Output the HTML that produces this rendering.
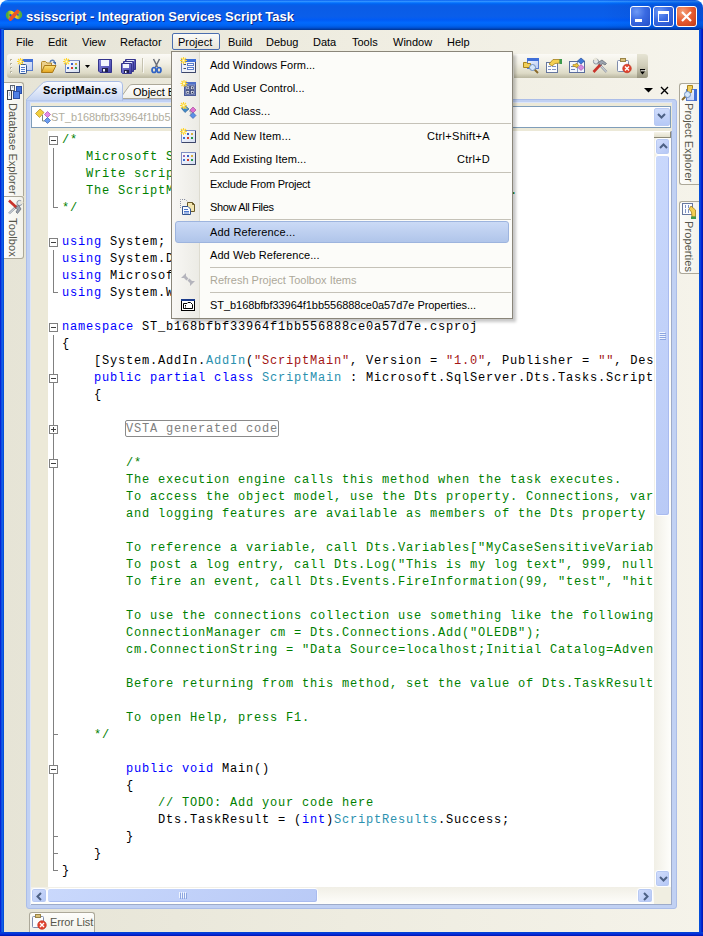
<!DOCTYPE html>
<html>
<head>
<meta charset="utf-8">
<title>ssisscript - Integration Services Script Task</title>
<style>
html,body{margin:0;padding:0;}
body{width:703px;height:936px;overflow:hidden;background:#ece9d8;font-family:"Liberation Sans",sans-serif;font-size:11px;color:#000;}
#win{position:absolute;left:0;top:0;width:703px;height:936px;overflow:hidden;background:linear-gradient(90deg,#e6e4d6 0,#eeece0 50%,#f5f3ea 100%);}
.abs{position:absolute;}
/* window frame */
#frameL{left:0;top:29px;width:4px;height:907px;background:linear-gradient(90deg,#0019cf 0,#0831d9 1px,#166aee 2px,#0855dd 3px,#0046d5 4px);}
#frameR{left:699px;top:29px;width:4px;height:907px;background:linear-gradient(90deg,#0046d5 0,#0855dd 1px,#0831d9 2px,#0019cf 3px,#001ea0 4px);}
#frameB{left:0;top:932px;width:703px;height:4px;background:linear-gradient(180deg,#0046d5 0,#0831d9 2px,#0019cf 3px,#001ea0 4px);}
#title{left:0;top:0;width:703px;height:30px;border-radius:8px 8px 0 0;
background:linear-gradient(180deg,#0058ee 0%,#3593ff 4%,#288eff 6%,#127dff 8%,#036ffc 10%,#0262ee 14%,#0a5ce6 20%,#0a5ce6 24%,#0a5eea 56%,#005bf5 66%,#026afe 76%,#0062ef 86%,#0052d6 92%,#0040ab 97%,#003092 100%);}
#titleR{left:603px;top:0;width:100px;height:30px;border-radius:0 8px 0 0;background:linear-gradient(90deg,rgba(0,40,160,0),rgba(0,40,160,0.28));}
#titletxt{left:26px;top:9px;color:#fff;font-weight:bold;font-size:13px;line-height:16px;white-space:nowrap;text-shadow:1px 1px 0 #0a2a8a;letter-spacing:-0.03px;}
/* menu bar */
#menubar{left:4px;top:30px;width:695px;height:24px;background:linear-gradient(90deg,#e5e3d6 0,#efede1 50%,#f6f4ec 100%);}
.mi{position:absolute;top:36px;font-size:11px;line-height:13px;white-space:nowrap;}
#projbtn{left:172px;top:33px;width:46px;height:15px;border:1px solid #4b6eaf;border-radius:2px;background:linear-gradient(180deg,#fbfbf9,#e8e6da);}
/* toolbar */
#tbrow{left:4px;top:54px;width:695px;height:26px;background:linear-gradient(90deg,#e5e3d6 0,#efede1 50%,#f6f4ec 100%);}
#toolbar1{left:7px;top:54px;width:165px;height:24px;border-radius:3px 0 0 3px;background:linear-gradient(180deg,#fbfaf6 0,#f1efe4 40%,#dddac6 80%,#b9b6a0 100%);}
#toolbar2{left:514px;top:54px;width:134px;height:24px;border-radius:0 3px 3px 0;background:linear-gradient(180deg,#fbfaf6 0,#f1efe4 40%,#dddac6 80%,#b9b6a0 100%);}

/* side strips */
#stripL{left:4px;top:80px;width:22px;height:852px;background:transparent;}
#stripR{left:677px;top:80px;width:22px;height:852px;background:transparent;}
.sidetab{position:absolute;background:linear-gradient(90deg,#fdfdfb,#f3f2ea);border:1px solid #aca899;}
.vtxt{position:absolute;white-space:nowrap;font-size:11px;line-height:13px;color:#55554a;transform-origin:0 0;transform:rotate(90deg);}
/* doc area */
#docbg{left:23px;top:80px;width:654px;height:830px;background:transparent;}
#tabstrip{left:26px;top:80px;width:651px;height:19px;background:transparent;}
#frame{left:26px;top:99px;width:651px;height:810px;background:#c1d1f3;border-radius:3px;box-sizing:border-box;border:1px solid #abbde8;}
#frameIn{left:31px;top:103px;width:641px;height:801px;background:#ece9d8;}
#combo{left:31px;top:106px;width:640px;height:22px;box-sizing:border-box;border:1px solid #7f9db9;background:#fff;}
#combotxt{left:51px;top:111px;letter-spacing:-0.08px;font-size:11px;line-height:13px;color:#b1aea0;white-space:nowrap;width:460px;overflow:hidden;}
#combobtn{left:654px;top:108px;width:16px;height:18px;border-radius:2px;background:linear-gradient(180deg,#cfdcfb,#b6c9f6);border:1px solid #b9caf3;box-sizing:border-box;}
/* editor */
#editor{left:31px;top:131px;width:623px;height:756px;background:#fff;overflow:hidden;}
#margin{left:0;top:0;width:17px;height:757px;background:#ece9d8;}
#code{left:31px;top:1px;width:592px;font-family:"Liberation Mono",monospace;font-size:12px;letter-spacing:0.8px;line-height:17px;color:#000;}
.ln{height:17px;overflow:hidden;white-space:pre;}
.c{color:#008000;}.k{color:#0000ff;}.s{color:#a31515;}.t{color:#2b91af;}
.vsta{color:#808080;}
#vstabox{left:94px;top:289px;width:154px;height:17px;box-sizing:border-box;border:1px solid #8a8a8a;border-radius:2px;}
.ob{position:absolute;left:18px;width:7px;height:7px;border:1px solid #808080;background:#fff;}
.ob:before{content:"";position:absolute;left:1px;top:3px;width:5px;height:1px;background:#404040;}
.ob.plus:after{content:"";position:absolute;left:3px;top:1px;width:1px;height:5px;background:#404040;}
.ovl{position:absolute;left:22px;width:1px;background:#808080;}
.otk{position:absolute;left:22px;width:5px;height:1px;background:#808080;}
/* scrollbars */
#vsb{left:654px;top:131px;width:17px;height:756px;background:linear-gradient(90deg,#f1efe6,#fefefb);}
#hsb{left:31px;top:887px;width:623px;height:17px;background:linear-gradient(180deg,#f1efe6,#fefefb);}
#corner{left:654px;top:887px;width:17px;height:17px;background:#f0eee1;}
.sbtn{position:absolute;box-sizing:border-box;border:1px solid #fff;border-radius:3px;background:linear-gradient(135deg,#d3defc,#b3c6f5);box-shadow:inset 0 0 0 1px #b7c9f3;}
.thumb{position:absolute;box-sizing:border-box;border:1px solid #fff;border-radius:3px;background:linear-gradient(135deg,#c9d8fc,#b9caf6);box-shadow:inset -1px -1px 0 #a9bbef;}

/* dropdown menu */
#ddshadow{left:175px;top:55px;width:341px;height:267px;background:rgba(0,0,0,0.22);filter:blur(1.5px);}
#dd{left:171px;top:51px;width:342px;height:268px;box-sizing:border-box;border:1px solid #8a867a;background:#fcfcf9;}
#ddgut{left:172px;top:52px;width:28px;height:266px;background:linear-gradient(90deg,#f8f7f4,#ecebe5);border-right:1px solid #dddbd0;box-sizing:border-box;}
#ddopen{left:173px;top:51px;width:46px;height:1px;background:#f4f3ec;}
.di{position:absolute;left:210px;font-size:11px;line-height:13px;white-space:nowrap;color:#000;}
.dk{position:absolute;font-size:11px;line-height:13px;white-space:nowrap;color:#000;}
.dsep{position:absolute;left:210px;width:301px;height:1px;background:#c5c2b8;}
#ddhl{left:175px;top:221px;width:334px;height:22px;box-sizing:border-box;border:1px solid #9db4de;border-radius:3px;background:linear-gradient(180deg,#cbdaf6,#b0c5ea);}
.ic{position:absolute;width:16px;height:16px;}

.chev{position:absolute;}
#split{left:654px;top:131px;width:17px;height:7px;box-sizing:border-box;background:linear-gradient(180deg,#f6f4ea,#e2dfcc);border-right:1px solid #8c8977;border-bottom:1px solid #8c8977;border-top:1px solid #fff;}
.grip{position:absolute;}
/* doc tabs */
#tabA{left:33px;top:82px;width:92px;height:18px;}
#tabtxtA{left:43px;top:84px;letter-spacing:0.23px;font-weight:bold;font-size:11px;line-height:13px;white-space:nowrap;}
#tabtxtB{left:133px;top:86px;font-size:11px;line-height:13px;white-space:nowrap;width:38px;overflow:hidden;}
#errtab{left:29px;top:912px;width:66px;height:21px;box-sizing:border-box;border:1px solid #aca899;border-bottom:none;border-radius:3px 3px 0 0;background:linear-gradient(180deg,#fdfdfb,#f1f0e8);}
#errtxt{left:50px;top:916px;font-size:11px;line-height:13px;white-space:nowrap;color:#55554a;letter-spacing:-0.15px;}

.wb{position:absolute;top:6px;width:21px;height:21px;box-sizing:border-box;border:1px solid #fff;border-radius:3px;}
#wbmin,#wbmax{background:radial-gradient(circle at 30% 25%,#6e9af6 0,#3a6ae2 45%,#2450c8 100%);}
#wbclose{background:radial-gradient(circle at 30% 25%,#f4a078 0,#e65a30 50%,#c23a16 100%);}
</style>
</head>
<body>
<div id="win">
<div class="abs" style="left:0;top:0;width:703px;height:10px;background:#fff"></div>
<div id="title" class="abs"></div>
<div id="titleR" class="abs"></div>
<div id="titletxt" class="abs">ssisscript - Integration Services Script Task</div>
<div id="menubar" class="abs"></div>
<div id="tbrow" class="abs"></div>
<div id="toolbar1" class="abs"></div>
<div id="toolbar2" class="abs"></div>
<div class="abs" style="left:637px;top:54px;width:11px;height:24px;border-radius:0 3px 3px 0;background:linear-gradient(180deg,#e6e4d4 0,#cfccb8 50%,#98957f 100%)"></div>
<div id="projbtn" class="abs"></div>
<span class="mi" style="left:16px">File</span>
<span class="mi" style="left:48px">Edit</span>
<span class="mi" style="left:82px">View</span>
<span class="mi" style="left:120px">Refactor</span>
<span class="mi" style="left:178px">Project</span>
<span class="mi" style="left:228px">Build</span>
<span class="mi" style="left:266px">Debug</span>
<span class="mi" style="left:313px">Data</span>
<span class="mi" style="left:352px">Tools</span>
<span class="mi" style="left:393px">Window</span>
<span class="mi" style="left:447px">Help</span>

<div id="stripL" class="abs"></div>
<div id="stripR" class="abs"></div>
<div id="docbg" class="abs"></div>
<div id="tabstrip" class="abs"></div>
<div id="frame" class="abs"></div>
<div class="abs" style="left:30px;top:102px;width:1px;height:803px;background:#dde6f9"></div>
<div class="abs" style="left:30px;top:102px;width:642px;height:1px;background:#dde6f9"></div>
<div id="frameIn" class="abs"></div>
<div id="combo" class="abs"></div>
<div id="combotxt" class="abs">ST_b168bfbf33964f1bb556888ce0a57d7e.csproj.ScriptMain</div>
<div id="combobtn" class="abs"></div>
<div id="editor" class="abs">
<div id="margin" class="abs"></div>
<div id="vstabox" class="abs"></div>
<div id="outl"><div class="ovl" style="top:17px;height:60px"></div><div class="otk" style="top:76px"></div><div class="ovl" style="top:119px;height:43px"></div><div class="otk" style="top:161px"></div><div class="ovl" style="top:204px;height:536px"></div><div class="otk" style="top:603px"></div><div class="otk" style="top:705px"></div><div class="otk" style="top:722px"></div><div class="otk" style="top:739px"></div><div class="ob" style="top:5px"></div><div class="ob" style="top:107px"></div><div class="ob" style="top:192px"></div><div class="ob" style="top:243px"></div><div class="ob plus" style="top:294px"></div><div class="ob" style="top:328px"></div><div class="ob" style="top:634px"></div></div>
<div id="code" class="abs">
<div class="ln"><span class="c">/*</span></div>
<div class="ln"><span class="c">   Microsoft SQL Server Integration Services Script Task</span></div>
<div class="ln"><span class="c">   Write scripts using Microsoft Visual C# 2008.</span></div>
<div class="ln"><span class="c">   The ScriptMain is the entry point class of the script.</span></div>
<div class="ln"><span class="c">*/</span></div>
<div class="ln">&nbsp;</div>
<div class="ln"><span class="k">using</span> System;</div>
<div class="ln"><span class="k">using</span> System.Data;</div>
<div class="ln"><span class="k">using</span> Microsoft.SqlServer.Dts.Runtime;</div>
<div class="ln"><span class="k">using</span> System.Windows.Forms;</div>
<div class="ln">&nbsp;</div>
<div class="ln"><span class="k">namespace</span> ST_b168bfbf33964f1bb556888ce0a57d7e.csproj</div>
<div class="ln">{</div>
<div class="ln">    [System.AddIn.<span class="t">AddIn</span>(<span class="s">"ScriptMain"</span>, Version = <span class="s">"1.0"</span>, Publisher = <span class="s">""</span>, Des</div>
<div class="ln">    <span class="k">public partial class</span> <span class="t">ScriptMain</span> : Microsoft.SqlServer.Dts.Tasks.Script</div>
<div class="ln">    {</div>
<div class="ln">&nbsp;</div>
<div class="ln">        <span class="vsta">VSTA generated code</span></div>
<div class="ln">&nbsp;</div>
<div class="ln"><span class="c">        /*</span></div>
<div class="ln"><span class="c">        The execution engine calls this method when the task executes.</span></div>
<div class="ln"><span class="c">        To access the object model, use the Dts property. Connections, var</span></div>
<div class="ln"><span class="c">        and logging features are available as members of the Dts property </span></div>
<div class="ln">&nbsp;</div>
<div class="ln"><span class="c">        To reference a variable, call Dts.Variables["MyCaseSensitiveVariab</span></div>
<div class="ln"><span class="c">        To post a log entry, call Dts.Log("This is my log text", 999, null</span></div>
<div class="ln"><span class="c">        To fire an event, call Dts.Events.FireInformation(99, "test", "hit</span></div>
<div class="ln">&nbsp;</div>
<div class="ln"><span class="c">        To use the connections collection use something like the following</span></div>
<div class="ln"><span class="c">        ConnectionManager cm = Dts.Connections.Add("OLEDB");</span></div>
<div class="ln"><span class="c">        cm.ConnectionString = "Data Source=localhost;Initial Catalog=Adven</span></div>
<div class="ln">&nbsp;</div>
<div class="ln"><span class="c">        Before returning from this method, set the value of Dts.TaskResult</span></div>
<div class="ln">&nbsp;</div>
<div class="ln"><span class="c">        To open Help, press F1.</span></div>
<div class="ln"><span class="c">    */</span></div>
<div class="ln">&nbsp;</div>
<div class="ln">        <span class="k">public void</span> Main()</div>
<div class="ln">        {</div>
<div class="ln">            <span class="c">// TODO: Add your code here</span></div>
<div class="ln">            Dts.TaskResult = (<span class="k">int</span>)<span class="t">ScriptResults</span>.Success;</div>
<div class="ln">        }</div>
<div class="ln">    }</div>
<div class="ln">}</div>
</div>
</div>
<div id="vsb" class="abs"></div>
<div id="hsb" class="abs"></div>
<div id="corner" class="abs"></div>
<!--BODY2-->

<div id="split" class="abs"></div>
<div class="sbtn" style="left:655px;top:138px;width:15px;height:17px"><svg class="chev" style="left:3px;top:4px" width="9" height="6" viewBox="0 0 9 6"><path d="M1 5 L4.5 1.5 L8 5" fill="none" stroke="#4d6185" stroke-width="2"/></svg></div>
<div class="thumb" style="left:655px;top:155px;width:15px;height:361px"></div>
<div class="sbtn" style="left:655px;top:870px;width:15px;height:17px"><svg class="chev" style="left:3px;top:5px" width="9" height="6" viewBox="0 0 9 6"><path d="M1 1 L4.5 4.5 L8 1" fill="none" stroke="#4d6185" stroke-width="2"/></svg></div>
<div class="sbtn" style="left:31px;top:888px;width:16px;height:15px"><svg class="chev" style="left:4px;top:3px" width="6" height="9" viewBox="0 0 6 9"><path d="M5 1 L1.5 4.5 L5 8" fill="none" stroke="#4d6185" stroke-width="2"/></svg></div>
<div class="thumb" style="left:47px;top:888px;width:271px;height:15px"></div>
<div class="sbtn" style="left:637px;top:888px;width:16px;height:15px"><svg class="chev" style="left:5px;top:3px" width="6" height="9" viewBox="0 0 6 9"><path d="M1 1 L4.5 4.5 L1 8" fill="none" stroke="#4d6185" stroke-width="2"/></svg></div>
<svg class="abs" style="left:657px;top:113px" width="9" height="6" viewBox="0 0 9 6"><path d="M1 1 L4.5 4.5 L8 1" fill="none" stroke="#4d6185" stroke-width="2"/></svg>
<svg class="abs" style="left:26px;top:80px" width="160" height="21" viewBox="0 0 160 21">
<defs><linearGradient id="tg" x1="0" y1="0" x2="0" y2="1"><stop offset="0" stop-color="#fdfdfe"/><stop offset="1" stop-color="#c3d3f3"/></linearGradient>
<linearGradient id="tg2" x1="0" y1="0" x2="0" y2="1"><stop offset="0" stop-color="#fefefd"/><stop offset="1" stop-color="#f1f0e8"/></linearGradient></defs>
<path d="M94 18.500 L103.500 5.500 Q104.500 4.500 107 4.500 L160 4.500 L160 18.500 Z" fill="url(#tg2)" stroke="#aca899" stroke-width="1"/>
<path d="M0.500 21 L0.500 19.500 L14.500 5 Q17.500 1.500 21 1.500 L93 1.500 Q96.500 1.500 96.500 5 L96.500 21 Z" fill="url(#tg)" stroke="#a9bde6" stroke-width="1"/>
</svg>
<div id="tabtxtA" class="abs">ScriptMain.cs</div>
<div id="tabtxtB" class="abs">Object Browser</div>
<svg class="abs" style="left:644px;top:88px" width="9" height="5" viewBox="0 0 9 5"><path d="M0 0 H9 L4.500 4.500 Z" fill="#000"/></svg>
<svg class="abs" style="left:660px;top:86px" width="9" height="9" viewBox="0 0 9 9"><path d="M1 1 L8 8 M8 1 L1 8" stroke="#000" stroke-width="1.400"/></svg>
<div id="errtab" class="abs"></div>
<div id="errtxt" class="abs">Error List</div>

<div class="sidetab" style="left:4px;top:82px;width:20px;height:114px;border-left:none;border-bottom:none;border-radius:0 3px 0 0;box-sizing:border-box"></div>
<div class="sidetab" style="left:4px;top:196px;width:20px;height:63px;border-left:none;border-radius:0 3px 3px 0;box-sizing:border-box"></div>
<div class="vtxt" style="left:19px;top:103px;letter-spacing:0.03px">Database Explorer</div>
<div class="vtxt" style="left:19px;top:218px;letter-spacing:0.15px">Toolbox</div>
<div class="sidetab" style="left:679px;top:83px;width:20px;height:102px;border-right:none;border-radius:3px 0 0 3px;box-sizing:border-box"></div>
<div class="sidetab" style="left:679px;top:201px;width:20px;height:73px;border-right:none;border-radius:3px 0 0 3px;box-sizing:border-box"></div>
<div class="vtxt" style="left:695px;top:103px;letter-spacing:0.05px">Project Explorer</div>
<div class="vtxt" style="left:695px;top:221px;letter-spacing:0.1px">Properties</div>

<div id="wbmin" class="wb" style="left:630px"><div class="abs" style="left:4px;top:12px;width:7px;height:3px;background:#fff"></div></div>
<div id="wbmax" class="wb" style="left:653px"><div class="abs" style="left:4px;top:4px;width:11px;height:11px;box-sizing:border-box;border:1px solid #fff;border-top:3px solid #fff"></div></div>
<div id="wbclose" class="wb" style="left:676px"><svg class="abs" style="left:4px;top:4px" width="11" height="11" viewBox="0 0 11 11"><path d="M1 1 L10 10 M10 1 L1 10" stroke="#fff" stroke-width="2.200"/></svg></div>
<svg class="abs" style="left:5px;top:8px" width="18" height="14" viewBox="0 0 18 14">
<defs><linearGradient id="ai1" x1="0" y1="0" x2="1" y2="0"><stop offset="0" stop-color="#4faa3a"/><stop offset="0.300" stop-color="#f5d21e"/><stop offset="0.700" stop-color="#f7c81c"/><stop offset="1" stop-color="#55ad3c"/></linearGradient></defs>
<path d="M3.500 9.500 C1 6 4.500 2.500 8 5.500 L10.500 8 C13.500 11.500 17 8 14.500 4.500" fill="none" stroke="url(#ai1)" stroke-width="3.400" stroke-linecap="round"/>
<path d="M5.500 11 L12.500 3.500" stroke="#e8552a" stroke-width="3.800" stroke-linecap="round"/>
</svg>

<div class="abs" style="left:671px;top:131px;width:1px;height:774px;background:#9dabc9"></div>
<div class="abs" style="left:31px;top:904px;width:641px;height:1px;background:#9dabc9"></div>
<svg class="abs" style="left:659px;top:332px" width="7" height="9" viewBox="0 0 7 9"><path d="M0 0.500 H6 M0 2.500 H6 M0 4.500 H6 M0 6.500 H6" stroke="#eef4fe"/><path d="M1 1.500 H7 M1 3.500 H7 M1 5.500 H7 M1 7.500 H7" stroke="#8ca5e0"/></svg>
<svg class="abs" style="left:179px;top:892px" width="9" height="7" viewBox="0 0 9 7"><path d="M0.500 0 V6 M2.500 0 V6 M4.500 0 V6 M6.500 0 V6" stroke="#eef4fe"/><path d="M1.500 1 V7 M3.500 1 V7 M5.500 1 V7 M7.500 1 V7" stroke="#8ca5e0"/></svg>
<!--ICONS1S--><svg class="abs" style="left:0;top:0" width="703" height="936" viewBox="0 0 703 936">
<defs>
<g id="spark"><path d="M3.500 0 V7 M0 3.500 H7 M1 1 L6 6 M6 1 L1 6" stroke="#ffd52e" stroke-width="1.100"/><rect x="2.500" y="2.500" width="2" height="2" fill="#fffbd0"/></g>
<linearGradient id="gwin" x1="0" y1="0" x2="1" y2="1"><stop offset="0" stop-color="#f4f7fe"/><stop offset="1" stop-color="#b9cbf2"/></linearGradient>
<linearGradient id="gfold" x1="0" y1="0" x2="0" y2="1"><stop offset="0" stop-color="#fbe27a"/><stop offset="1" stop-color="#e2a21c"/></linearGradient>
<linearGradient id="gflop" x1="0" y1="0" x2="1" y2="1"><stop offset="0" stop-color="#8a8ae0"/><stop offset="1" stop-color="#3c3ca4"/></linearGradient>
<linearGradient id="gpanel" x1="0" y1="0" x2="1" y2="1"><stop offset="0" stop-color="#ffffff"/><stop offset="1" stop-color="#d4ddf2"/></linearGradient>
<g id="panel"><rect x="0.500" y="0.500" width="14" height="12" fill="url(#gpanel)" stroke="#7f8fc4"/><path d="M1 12.500 H14.500 V1" fill="none" stroke="#3d4668"/></g>
<g id="dots"><rect x="6" y="3" width="2" height="2" fill="#3a5fc8"/><rect x="10" y="3" width="2" height="2" fill="#d8b040"/><rect x="2" y="7" width="2" height="2" fill="#3a6fd0"/><rect x="6" y="7" width="2" height="2" fill="#d83a2a"/><rect x="10" y="7" width="2" height="2" fill="#2a9a4a"/></g>
<g id="floppy"><path d="M0.500 0.500 H13.500 V13.500 H2 L0.500 12 Z" fill="url(#gflop)" stroke="#34348c"/><rect x="3" y="1" width="8" height="6" fill="#f2f5fd"/><rect x="4" y="9" width="6" height="4" fill="#20204c"/><rect x="5" y="10" width="2" height="2.500" fill="#f2f5fd"/></g>
</defs>
<!-- toolbar grip -->
<g fill="#b6b3a0"><rect x="10" y="59" width="2" height="2"/><rect x="10" y="63" width="2" height="2"/><rect x="10" y="67" width="2" height="2"/><rect x="10" y="71" width="2" height="2"/></g>
<g fill="#ffffff"><rect x="11" y="60" width="1" height="1"/><rect x="11" y="64" width="1" height="1"/><rect x="11" y="68" width="1" height="1"/><rect x="11" y="72" width="1" height="1"/></g>
<!-- 1 new project -->
<g transform="translate(17,58)">
<rect x="5.500" y="1.500" width="10" height="11" fill="url(#gwin)" stroke="#5b7dcc"/><rect x="5" y="1" width="11" height="3" fill="#3f6fd8"/>
<rect x="2.500" y="6.500" width="7" height="9" rx="1" fill="#f6f9ff" stroke="#34558f"/><path d="M4 9.500 H8 M4 11.500 H8 M4 13.500 H8" stroke="#4d78cc"/>
<use href="#spark" x="0" y="0"/>
</g>
<!-- 2 open -->
<g transform="translate(40,58)">
<path d="M10 4.500 C10.500 1.500 14 1.500 14.500 4" fill="none" stroke="#5b7fb8" stroke-width="1.400"/><path d="M12.500 4 H16 V7 Z" fill="#4a6fa8"/>
<path d="M1.500 14 V4.500 Q1.500 3.500 2.500 3.500 H5.500 L7 5 H11.500 V7" fill="#ecd08a" stroke="#b58a2c"/>
<path d="M1.500 14.500 L4.500 7.500 H16 L12.500 14.500 Z" fill="url(#gfold)" stroke="#a87818"/>
</g>
<!-- 3 add item -->
<g transform="translate(63,58)"><use href="#panel" x="2" y="2"/><g transform="translate(2,2)"><use href="#dots"/></g><use href="#spark" x="0" y="0"/></g>
<path d="M85 65 H90 L87.500 68 Z" fill="#000"/>
<!-- 5 save -->
<g transform="translate(98,59)"><use href="#floppy"/></g>
<!-- 6 save all -->
<g transform="translate(121,59)">
<path d="M4.500 0.500 H14.500 V10.500 H4.500 Z" fill="url(#gflop)" stroke="#34348c"/><rect x="6" y="1" width="7" height="2" fill="#e6ebfb"/>
<path d="M2.500 2.500 H12.500 V12.500 H2.500 Z" fill="url(#gflop)" stroke="#34348c"/><rect x="4" y="3" width="7" height="2" fill="#e6ebfb"/>
<path d="M0.500 4.500 H10.500 V14.500 H1.500 L0.500 13.500 Z" fill="url(#gflop)" stroke="#34348c"/><rect x="2" y="5" width="6" height="4" fill="#f2f5fd"/><rect x="3" y="11" width="5" height="3" fill="#20204c"/><rect x="4" y="12" width="1.500" height="2" fill="#f2f5fd"/>
</g>
<rect x="142" y="58" width="1" height="14" fill="#c5c2b0"/><rect x="143" y="59" width="1" height="14" fill="#ffffff" opacity="0.700"/>
<!-- 7 cut -->
<g transform="translate(151,59)">
<path d="M2.500 0 L6.500 8 M8.500 0 L4.500 8" stroke="#6a6e78" stroke-width="1.500" fill="none"/>
<ellipse cx="3" cy="11" rx="2" ry="2.500" fill="none" stroke="#2f62c4" stroke-width="1.700"/><ellipse cx="8" cy="11" rx="2" ry="2.500" fill="none" stroke="#2f62c4" stroke-width="1.700"/>
</g>
<!-- A solution explorer -->
<g id="icA" transform="translate(523,58)">
<rect x="4.500" y="0.500" width="11" height="10" fill="url(#gwin)" stroke="#5b7dcc"/><rect x="4" y="0" width="12" height="3" fill="#3f6fd8"/>
<path d="M0.500 4.500 H3.500 L4.500 5.500 H7.500 V9.500 H0.500 Z" fill="#f1cf5a" stroke="#a8841e"/>
<path d="M11.500 11.500 L15 15" stroke="#8a6a2a" stroke-width="2"/><circle cx="9.500" cy="9.500" r="3" fill="#d4e6fa" stroke="#6f8fc0"/>
</g>
<!-- B properties window -->
<g id="icB" transform="translate(546,58)">
<rect x="0.500" y="4.500" width="11" height="10" fill="#fbfcff" stroke="#66779f"/><path d="M2 8.500 H5 M6 8.500 H10 M2 11.500 H5 M6 11.500 H10" stroke="#8094c4"/>
<path d="M3 6 L7 1.500 L14 1.500 V5 L9 5.500 L6 8 Z" fill="#f3cf52" stroke="#a5801c" stroke-width="0.800"/><rect x="13.500" y="1" width="2.500" height="5" fill="#3f9a4c"/>
</g>
<!-- C object browser -->
<g transform="translate(569,58)">
<rect x="0.500" y="3.500" width="15" height="11" fill="#f3f6fd" stroke="#5a6c9c"/><path d="M8.500 4 V14" stroke="#8a9ac4"/><path d="M2 8.500 H6 M2 11.500 H6" stroke="#6e86c0"/>
<path d="M12 0 L15.500 3 L12 6 L8.500 3 Z" fill="#3f78d8" stroke="#2a52a0" stroke-width="0.700"/>
<path d="M12 6.500 L15 9.500 L12 12.500 L9 9.500 Z" fill="#d58ae0" stroke="#9a4cae" stroke-width="0.700"/>
<path d="M4 6.500 H7 V5 L10 7.500 L7 10 V8.500 H4 Z" fill="#f2c83c" stroke="#a8801c" stroke-width="0.600"/>
</g>
<!-- D toolbox -->
<g id="icD" transform="translate(592,58)">
<path d="M14.500 14 L5 4" stroke="#8d949e" stroke-width="2.400"/><path d="M14.500 14 L5 4" stroke="#e6eaf0" stroke-width="1"/><circle cx="4" cy="3.500" r="2.600" fill="#dfe4ea" stroke="#8d949e"/><rect x="2" y="0" width="3" height="3" fill="#e9e7da" transform="rotate(-45 3.500 1.500)"/>
<path d="M1.500 14 L9 6" stroke="#c8322a" stroke-width="2.600"/><path d="M6 4.500 L10 2 L14.500 5.500 L13 7 L10.500 5.500 L9 7.500 Z" fill="#9aa2ae" stroke="#5f6670" stroke-width="0.700"/>
</g>
<!-- E error list -->
<g transform="translate(616,58)">
<rect x="1.500" y="2.500" width="11" height="11" rx="1" fill="#fbfcff" stroke="#7f8cac"/><rect x="4.500" y="0.500" width="5" height="3" fill="#d9c07a" stroke="#9a8448"/>
<circle cx="11" cy="10.500" r="4.300" fill="#e2432e" stroke="#b62a1a" stroke-width="0.600"/><path d="M9 8.500 L13 12.500 M13 8.500 L9 12.500" stroke="#fff" stroke-width="1.400"/>
</g>
<!-- overflow -->
<rect x="640" y="69" width="5" height="1.500" fill="#000"/><path d="M640 71.500 H645 L642.500 74.500 Z" fill="#000"/><rect x="641" y="70" width="5" height="1" fill="#fff" opacity="0.600"/>

<!-- side tab icons (rotated) -->
<g transform="translate(697,85) rotate(90) translate(-523,-58)"><use href="#icA"/></g>
<g transform="translate(697,203) rotate(90) translate(-546,-58)"><use href="#icB"/></g>
<g transform="translate(23,199) rotate(90) translate(-592,-58)"><use href="#icD"/></g>
<!-- database explorer icon -->
<g transform="translate(7,85)">
<rect x="9.500" y="1.500" width="5" height="7" fill="#3f6fd8" stroke="#2a4fa8"/><rect x="6.500" y="6.500" width="6" height="7" fill="#4f80e6" stroke="#2a4fa8"/>
<rect x="3.500" y="0.500" width="4" height="5" fill="#f4f6fa" stroke="#5a6270"/><rect x="0.500" y="5.500" width="4" height="9" fill="#f4f6fa" stroke="#3c444e"/><path d="M2 8 H3 M2 10 H3 M5 2 H6" stroke="#7a8ab0"/>
</g>
<!-- nav combo icon -->
<g transform="translate(35,108)">
<path d="M7.500 7 V13 H10" fill="none" stroke="#7a8a80"/>
<path d="M0.500 5.500 L5 1 L9 4.500 L4.500 9.500 Z" fill="#f2cf3e" stroke="#b08a1c" stroke-width="0.700"/>
<path d="M12.500 3.500 L15.500 6.500 L12.500 9.500 L9.500 6.500 Z" fill="#e68ae8" stroke="#a44cae" stroke-width="0.700"/>
<path d="M12.500 9.500 L15.500 12.500 L12.500 15.500 L9.500 12.500 Z" fill="#6a9cf0" stroke="#3560b0" stroke-width="0.700"/>
</g>
<!-- error list tab icon -->
<g transform="translate(31,914)">
<rect x="1.500" y="2.500" width="11" height="11" rx="1" fill="#fbfcff" stroke="#7f8cac"/><rect x="4.500" y="0.500" width="5" height="3" fill="#d9c07a" stroke="#9a8448"/>
<circle cx="11" cy="11" r="4.300" fill="#e2432e" stroke="#b62a1a" stroke-width="0.600"/><path d="M9 9 L13 13 M13 9 L9 13" stroke="#fff" stroke-width="1.400"/>
</g>
</svg>
<!--ICONS1E-->
<!--ICONS-->
<!--MENU-->
<div id="ddshadow" class="abs"></div>
<div id="dd" class="abs"></div>
<div id="ddgut" class="abs"></div>
<div id="ddhl" class="abs"></div>
<span class="di" style="top:59px">Add Windows Form...</span>
<span class="di" style="top:82px;letter-spacing:0.06px">Add User Control...</span>
<span class="di" style="top:105px;letter-spacing:0.08px">Add Class...</span>
<span class="di" style="top:130px;letter-spacing:0.2px">Add New Item...</span>
<span class="dk" style="top:130px;left:427px;letter-spacing:0.3px">Ctrl+Shift+A</span>
<span class="di" style="top:153px;letter-spacing:0.08px">Add Existing Item...</span>
<span class="dk" style="top:153px;left:457px;letter-spacing:0.25px">Ctrl+D</span>
<span class="di" style="top:178px;letter-spacing:-0.25px">Exclude From Project</span>
<span class="di" style="top:201px;letter-spacing:-0.35px">Show All Files</span>
<span class="di" style="top:226px;letter-spacing:0.19px">Add Reference...</span>
<span class="di" style="top:249px;letter-spacing:0.08px">Add Web Reference...</span>
<span class="di" style="top:274px;color:#aca899">Refresh Project Toolbox Items</span>
<span class="di" style="top:299px;letter-spacing:-0.05px">ST_b168bfbf33964f1bb556888ce0a57d7e Properties...</span>
<div class="dsep" style="top:123px"></div>
<div class="dsep" style="top:172px"></div>
<div class="dsep" style="top:219px"></div>
<div class="dsep" style="top:267px"></div>
<div class="dsep" style="top:292px"></div>

<div id="frameL" class="abs"></div>
<div id="frameR" class="abs"></div>
<div id="frameB" class="abs"></div>
<!--ICONS2S--><svg class="abs" style="left:0;top:0" width="703" height="936" viewBox="0 0 703 936">
<!-- M1 add windows form -->
<g transform="translate(180,57)">
<rect x="1.500" y="2.500" width="14" height="13" fill="#eef1f8" stroke="#6a7fb8"/><rect x="1" y="2" width="15" height="3" fill="#3f6fd8"/><path d="M2 15.500 H15.500 V5" fill="none" stroke="#3d4668"/>
<rect x="7.500" y="6.500" width="6" height="2" fill="#fff" stroke="#5b7dcc"/><rect x="7.500" y="10.500" width="6" height="2" fill="#fff" stroke="#5b7dcc"/><path d="M3.500 7.500 H6 M3.500 11.500 H6" stroke="#44506c"/>
<use href="#spark" x="0" y="0"/>
</g>
<!-- M2 add user control -->
<g transform="translate(180,80)">
<rect x="4.500" y="2.500" width="11" height="13" fill="#8c9cd0" stroke="#4a5a98"/><rect x="4" y="2" width="12" height="2.500" fill="#4f6fc8"/>
<g fill="#f4f6fc" stroke="#3a4678" stroke-width="0.800"><rect x="6" y="6" width="3.500" height="3.500"/><rect x="10.500" y="6" width="3.500" height="3.500"/><rect x="6" y="10.500" width="3.500" height="3.500"/><rect x="10.500" y="10.500" width="3.500" height="3.500"/></g>
<g fill="#20284c"><rect x="7.200" y="7.200" width="1.300" height="1.300"/><rect x="11.700" y="7.200" width="1.300" height="1.300"/><rect x="7.200" y="11.700" width="1.300" height="1.300"/><rect x="11.700" y="11.700" width="1.300" height="1.300"/></g>
<use href="#spark" x="0.500" y="0"/>
</g>
<!-- M3 add class -->
<g transform="translate(180,102)">
<path d="M9 9 H11 V14 H12" fill="none" stroke="#8a8fa0"/>
<path d="M1.500 6.500 L5 3.500 L9 7 L5 10.500 Z" fill="#3f8ac8" stroke="#2a5a90" stroke-width="0.600"/><path d="M2.500 6.500 L5 4.500 L8 7 Z" fill="#e8d870" opacity="0.800"/>
<path d="M13 5 L16 8 L13 11 L10 8 Z" fill="#e070d0" stroke="#a03c94" stroke-width="0.600"/>
<path d="M13 10.500 L16 13.500 L13 16.500 L10 13.500 Z" fill="#5a90e8" stroke="#2e58a8" stroke-width="0.600"/>
<use href="#spark" x="0" y="0"/>
</g>
<!-- M4 add new item -->
<g transform="translate(180,128)"><use href="#panel" x="1" y="2"/><g transform="translate(1,2)"><use href="#dots"/></g><use href="#spark" x="0" y="0"/></g>
<!-- M5 add existing item -->
<g transform="translate(180,150)"><use href="#panel" x="1" y="2"/><g transform="translate(1,2)"><use href="#dots"/><rect x="2" y="3" width="2" height="2" fill="#9a6ab0"/></g></g>
<!-- M7 show all files -->
<g transform="translate(180,199)">
<path d="M0.500 9 V0.500 H5.500 L7.500 2.500" fill="none" stroke="#8a8fa0" stroke-dasharray="1 1"/>
<path d="M7.500 3.500 H12.500 L14.500 5.500 V12.500 H7.500 Z" fill="#f4e6b0" stroke="#6a5a2a"/><path d="M12.500 3.500 V5.500 H14.500" fill="none" stroke="#6a5a2a"/>
<path d="M2.500 7.500 H8 L10.500 10 V15.500 H2.500 Z" fill="#f8faff" stroke="#34558f"/><path d="M4 10.500 H8 M4 12.500 H9 M4 14 H9" stroke="#4d78cc"/>
</g>
<!-- M10 refresh disabled -->
<g transform="translate(180,273)" fill="#b4b4bc">
<path d="M1 5 L6 0 L6 3 L8.500 5.500 L6.500 7.500 L4 5 Z"/>
<path d="M15 8 L10 13 L10 10 L7.500 7.500 L9.500 5.500 L12 8 Z"/>
</g>
<!-- M11 properties -->
<g transform="translate(181,299)">
<rect x="0.500" y="0.500" width="13" height="11" fill="#fff" stroke="#000"/><rect x="0" y="0" width="14" height="2" fill="#1a3a8a"/>
<path d="M2.500 9.500 V4.500 H6 L7 3.500 H9.500 L11.500 5.500 V9.500 Z" fill="#fff" stroke="#000"/><path d="M4 6.500 H5 M4 8 H5" stroke="#000"/>
</g>
</svg>
<!--ICONS2E-->
</div>
</body>
</html>
